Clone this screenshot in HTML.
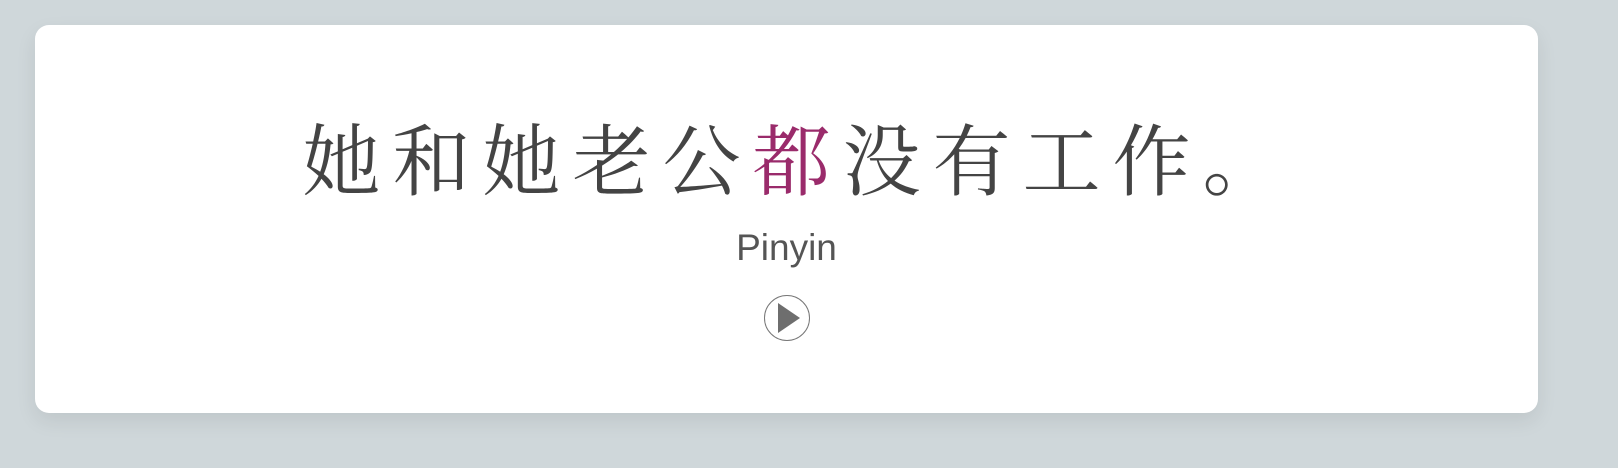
<!DOCTYPE html>
<html><head><meta charset="utf-8"><style>
html,body{margin:0;padding:0;width:1618px;height:468px;background:#cfd7da;overflow:hidden}
.card{position:absolute;left:35px;top:25px;width:1503px;height:388px;background:#fff;border-radius:14px;box-shadow:0 8px 20px rgba(0,0,0,0.08)}
.zh{position:absolute;left:35px;width:1503px;top:118px;text-align:center;font-family:"Liberation Serif","Noto Serif CJK SC",serif;font-size:78px;line-height:90px;color:#444;letter-spacing:12px;box-sizing:border-box;padding-left:22px}
.zh span{color:#9a2b6b}
.py{position:absolute;left:35px;width:1503px;top:226px;text-align:center;font-family:"Liberation Sans",sans-serif;font-size:37px;line-height:44px;color:#555}
.btn{position:absolute;left:764px;top:295px;width:44px;height:44px;border:1px solid #777;border-radius:50%;background:#fff}
</style></head><body>
<div class="card"></div>
<div class="zh">她和她老公<span>都</span>没有工作。</div>
<div class="py">Pinyin</div>
<div class="btn"><svg width="44" height="44" viewBox="0 0 44 44"><polygon points="13,7 13,37 35,22" fill="#6e6e6e"/></svg></div>
</body></html>
